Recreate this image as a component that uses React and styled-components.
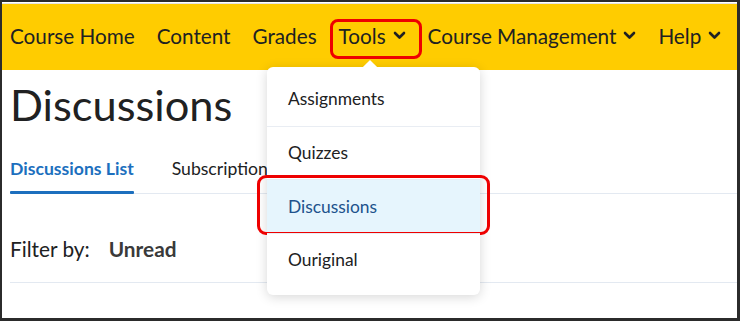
import React from "react";
import styled, { createGlobalStyle } from "styled-components";

const Global = createGlobalStyle`
  html, body { margin: 0; padding: 0; background: #fff; }
  body { font-family: Lato, "Open Sans", sans-serif; color: #202122; }
`;

const Frame = styled.div`
  position: relative;
  width: 740px;
  height: 321px;
  box-sizing: border-box;
  border: 2px solid #2b2b2b;
  border-right-width: 3px;
  border-bottom-width: 3px;
  overflow: hidden;
  background: #fff;
`;

const NavBar = styled.nav`
  display: flex;
  align-items: center;
  height: 67px;
  box-sizing: border-box;
  padding-bottom: 3px;
  margin-top: 1px;
  border-top: 1px solid #e4e4e4;
  background: #ffcc00;
  padding-left: 8px;
  gap: 22px;
`;

const NavItem = styled.div`
  position: relative;
  display: flex;
  align-items: center;
  gap: 7px;
  font-size: 20.7px;
  line-height: 24px;
  color: #202122;
  ${(p) =>
    p.$boxed &&
    `
    &::after {
      content: "";
      position: absolute;
      left: -9px; right: -16px; top: -5px; bottom: -11px;
      border: 3px solid #ee0000;
      border-radius: 8px;
    }
  `}
`;

const Chevron = () => (
  <svg width="13" height="9" viewBox="0 0 13 9">
    <path d="M2 2 L6.5 6.5 L11 2" fill="none" stroke="#202122" strokeWidth="2.6" strokeLinecap="round" strokeLinejoin="round" />
  </svg>
);

const Content = styled.main`
  padding: 0 0 0 8px;
`;

const Title = styled.h1`
  margin: 0;
  padding-top: 8px;
  font-size: 43.4px;
  font-weight: 400;
  line-height: 52px;
  color: #202122;
`;

const Tabs = styled.div`
  display: flex;
  gap: 38px;
  margin-top: 28px;
  border-bottom: 1px solid #e3e9f1;
`;

const Tab = styled.div`
  position: relative;
  font-size: 17.6px;
  line-height: 21px;
  font-weight: ${(p) => (p.$active ? 700 : 400)};
  color: ${(p) => (p.$active ? "#1c6fbe" : "#202122")};
  padding-bottom: 14px;
  ${(p) =>
    p.$active &&
    `
    &::after {
      content: "";
      position: absolute;
      left: 0; right: 0; bottom: -1px;
      height: 3px;
      background: #1c6fbe;
      border-radius: 1px;
    }
  `}
`;

const FilterRow = styled.div`
  display: flex;
  align-items: flex-start;
  gap: 19px;
  height: 89px;
  box-sizing: border-box;
  padding-top: 42px;
  border-bottom: 1px solid #e3e9f1;
  font-size: 20.8px;
  line-height: 25px;
`;

const FilterValue = styled.span`
  font-weight: 700;
  color: #3a3a3a;
`;

const Menu = styled.div`
  position: absolute;
  left: 265px;
  top: 65px;
  width: 213px;
  padding: 5px 0 9px;
  background: #fff;
  border-radius: 6px;
  box-shadow: 0 2px 12px rgba(0, 0, 0, 0.16);
  &::before {
    content: "";
    position: absolute;
    left: 98px;
    top: -5px;
    width: 10px;
    height: 10px;
    background: #fff;
    transform: rotate(45deg);
  }
`;

const MenuItem = styled.div`
  position: relative;
  height: 53.5px;
  display: flex;
  align-items: center;
  padding-left: 21px;
  font-size: 17.4px;
  color: ${(p) => (p.$active ? "#20528c" : "#202122")};
  background: ${(p) => (p.$active ? "#e6f5fd" : "#fff")};
  border-top: ${(p) => (p.$first ? "none" : "1px solid #e9edf3")};
  box-sizing: border-box;
  ${(p) =>
    p.$boxed &&
    `
    &::after {
      content: "";
      position: absolute;
      left: -10px; right: -10px; top: -5px; bottom: -2px;
      border: 3px solid #ee0000;
      border-radius: 9px;
    }
  `}
`;

const navItems = [
  { label: "Course Home" },
  { label: "Content" },
  { label: "Grades" },
  { label: "Tools", menu: true, boxed: true },
  { label: "Course Management", menu: true },
  { label: "Help", menu: true },
];

const menuItems = ["Assignments", "Quizzes", "Discussions", "Ouriginal"];

export default function App() {
  return (
    <>
      <Global />
      <Frame>
        <NavBar>
          {navItems.map((n) => (
            <NavItem key={n.label} $boxed={n.boxed}>
              <span>{n.label}</span>
              {n.menu && <Chevron />}
            </NavItem>
          ))}
        </NavBar>
        <Content>
          <Title>Discussions</Title>
          <Tabs>
            <Tab $active>Discussions List</Tab>
            <Tab>Subscriptions</Tab>
          </Tabs>
          <FilterRow>
            <span>Filter by:</span>
            <FilterValue>Unread</FilterValue>
          </FilterRow>
        </Content>
        <Menu>
          {menuItems.map((m, i) => (
            <MenuItem
              key={m}
              $first={i === 0}
              $active={m === "Discussions"}
              $boxed={m === "Discussions"}
            >
              {m}
            </MenuItem>
          ))}
        </Menu>
      </Frame>
    </>
  );
}
